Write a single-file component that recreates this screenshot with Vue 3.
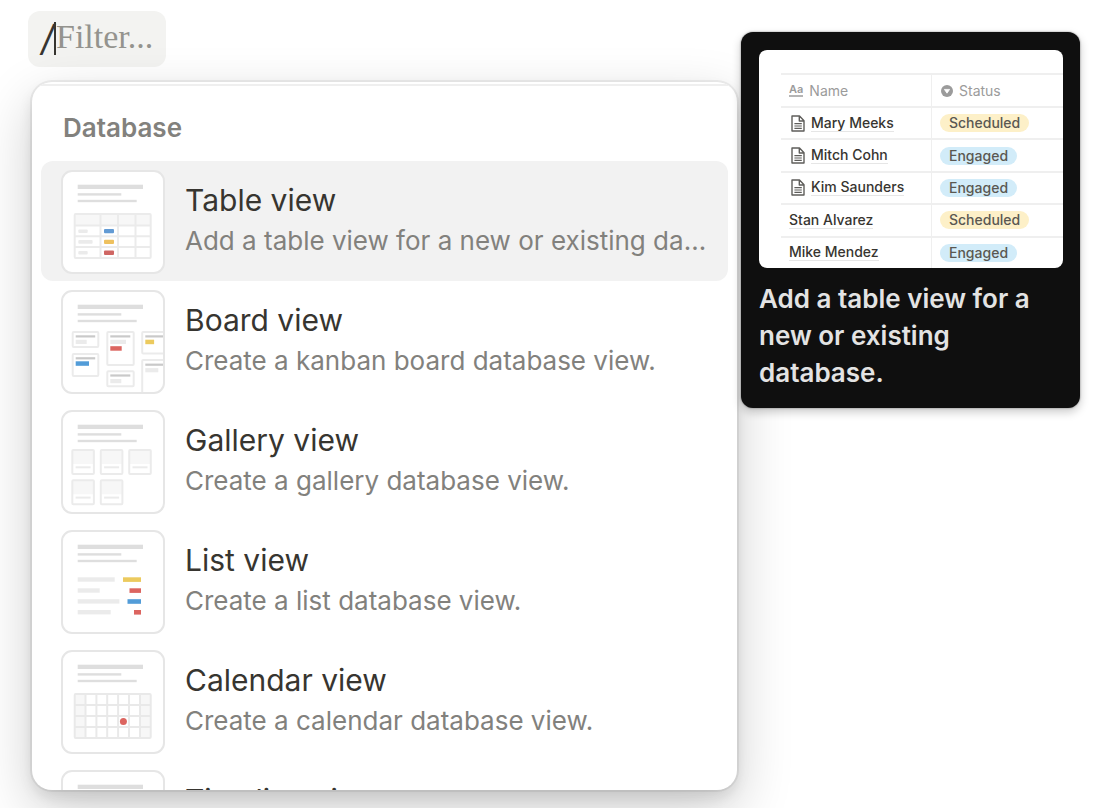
<script setup>
import { ref } from 'vue'

const items = [
  { kind: 'table', title: 'Table view', text: 'Add a table view for a new or existing database.' },
  { kind: 'board', title: 'Board view', text: 'Create a kanban board database view.' },
  { kind: 'gallery', title: 'Gallery view', text: 'Create a gallery database view.' },
  { kind: 'list', title: 'List view', text: 'Create a list database view.' },
  { kind: 'calendar', title: 'Calendar view', text: 'Create a calendar database view.' },
  { kind: 'timeline', title: 'Timeline view', text: '' },
]
const active = ref('table')
const query = ref('')

const people = [
  { name: 'Mary Meeks', status: 'Scheduled', page: true },
  { name: 'Mitch Cohn', status: 'Engaged', page: true },
  { name: 'Kim Saunders', status: 'Engaged', page: true },
  { name: 'Stan Alvarez', status: 'Scheduled', page: false },
  { name: 'Mike Mendez', status: 'Engaged', page: false },
]

const galleryCards = [[11.3, 40], [39.8, 40], [68.2, 40], [11.3, 70.3], [39.8, 70.3]]
const listBars = [
  { y: 47.3, w: 37, tag: 18, color: '#ecca5e' },
  { y: 58.3, w: 22, tag: 11.5, color: '#dc6560' },
  { y: 69.2, w: 41.7, tag: 13.5, color: '#529cd8' },
  { y: 80, w: 33, tag: 7, color: '#dc6560' },
]
</script>

<template>
  <main class="page">
    <section class="left">
      <label class="command">
        <span class="slash">/</span><span class="caret"></span>
        <input v-model="query" class="query" type="text" placeholder="Filter..." aria-label="Filter" />
      </label>

      <div class="menu">
        <h2 class="heading">Database</h2>
        <button
          v-for="item in items"
          :key="item.kind"
          type="button"
          class="item"
          :class="{ active: active === item.kind }"
          @click="active = item.kind"
        >
          <span class="thumb">
            <svg viewBox="2 2 100 100" aria-hidden="true">
              <g fill="#dedede">
                <rect x="16.7" y="14.7" width="65.3" height="4.3" />
                <rect x="16.7" y="23.2" width="43.6" height="2.4" />
                <rect x="16.7" y="29.8" width="59" height="2.4" />
              </g>

              <g v-if="item.kind === 'table'">
                <rect x="13.7" y="44" width="76" height="11.3" fill="#f7f7f7" />
                <g fill="none" stroke="#ebebeb" stroke-width="2">
                  <rect x="13.7" y="44" width="76" height="44" rx="1" />
                  <path d="M39.5 44V88M57 44V88M74.5 44V88M13.7 55.5H89.7M13.7 66.2H89.7M13.7 77H89.7" />
                </g>
                <g fill="#ebebeb">
                  <rect x="17.3" y="59.4" width="9.4" height="3.6" rx="1" />
                  <rect x="17.3" y="70.1" width="14.3" height="3.6" rx="1" />
                  <rect x="17.3" y="81" width="9.4" height="3.6" rx="1" />
                </g>
                <rect x="43" y="59" width="10" height="4.3" rx="1" fill="#639bd4" />
                <rect x="43" y="69.8" width="10" height="4.3" rx="1" fill="#eec15f" />
                <rect x="43" y="80.6" width="10" height="4.3" rx="1" fill="#cf6663" />
              </g>

              <g v-else-if="item.kind === 'board'">
                <g fill="none" stroke="#ebebeb" stroke-width="2">
                  <rect x="11.7" y="42" width="25.6" height="15" rx="1" />
                  <rect x="11.7" y="64" width="25.6" height="22" rx="1" />
                  <rect x="46.3" y="42" width="26.4" height="33" rx="1" />
                  <rect x="46.3" y="81.3" width="26.4" height="15" rx="1" />
                  <rect x="81.2" y="42" width="30" height="21.4" rx="1" />
                  <rect x="81.2" y="70" width="30" height="40" rx="1" />
                </g>
                <g fill="#c9c9c9">
                  <rect x="14.7" y="45.3" width="19.5" height="2.2" />
                  <rect x="14.7" y="67.2" width="19.5" height="2.2" />
                  <rect x="49.3" y="45.3" width="20" height="2.2" />
                  <rect x="49.3" y="84.4" width="20" height="2.2" />
                  <rect x="84.3" y="45.3" width="20" height="2.2" />
                  <rect x="84.3" y="73.6" width="20" height="2.2" />
                </g>
                <g fill="#ebebeb">
                  <rect x="14.7" y="49.8" width="11" height="4.2" />
                  <rect x="49.3" y="49.8" width="15.7" height="4.2" />
                  <rect x="49.3" y="89" width="11" height="4.2" />
                  <rect x="84.3" y="78.1" width="13" height="4.2" />
                </g>
                <rect x="14.7" y="71.3" width="13.3" height="4.5" fill="#529cd8" />
                <rect x="49.3" y="56.2" width="11.4" height="4.5" fill="#dc6560" />
                <rect x="84.3" y="49.7" width="8.8" height="4.5" fill="#ecca5e" />
              </g>

              <g v-else-if="item.kind === 'gallery'">
                <g v-for="[x, y] in galleryCards" :key="`${x}-${y}`">
                  <rect :x="x" :y="y" width="21.6" height="14" fill="#f7f7f7" />
                  <rect :x="x" :y="y" width="21.6" height="24" rx="1" fill="none" stroke="#ebebeb" stroke-width="2" />
                  <rect :x="x + 3.3" :y="y + 16.3" width="15" height="2" fill="#ebebeb" />
                </g>
              </g>

              <g v-else-if="item.kind === 'list'">
                <g v-for="bar in listBars" :key="bar.y">
                  <rect x="16.7" :y="bar.y" :width="bar.w" height="4.4" fill="#ebebeb" />
                  <rect :x="80 - bar.tag" :y="bar.y" :width="bar.tag" height="4.6" :fill="bar.color" />
                </g>
              </g>

              <g v-else-if="item.kind === 'calendar'">
                <path d="M13.7 44H24.3V88H13.7ZM79.2 44H89.7V88H79.2Z" fill="#f7f7f7" />
                <g fill="none" stroke="#e9e9e9" stroke-width="2">
                  <rect x="13.7" y="44" width="76" height="44" rx="1" />
                  <path d="M24.5 44V88M35.4 44V88M46.2 44V88M57.1 44V88M68 44V88M79 44V88M13.7 55H89.7M13.7 66H89.7M13.7 77H89.7" />
                </g>
                <circle cx="62.4" cy="71.4" r="3.5" fill="#dc6560" />
              </g>
            </svg>
          </span>
          <span class="copy">
            <span class="title">{{ item.title }}</span>
            <span class="text">{{ item.text }}</span>
          </span>
        </button>
      </div>
    </section>

    <aside class="tip">
      <div class="preview">
        <table>
          <thead>
            <tr>
              <th scope="col">
                <span class="cell"><span class="aa">Aa</span>Name</span>
              </th>
              <th scope="col">
                <span class="cell">
                  <svg class="select-icon" viewBox="0 0 12 12" aria-hidden="true">
                    <circle cx="6" cy="6" r="6" fill="#9b9b9b" />
                    <path d="M3.4 4.4H8.6L6 8.2Z" fill="#fff" stroke="#fff" stroke-width=".8" stroke-linejoin="round" />
                  </svg>
                  Status
                </span>
              </th>
            </tr>
          </thead>
          <tbody>
            <tr v-for="person in people" :key="person.name">
              <td>
                <span class="cell">
                  <svg v-if="person.page" class="page-icon" viewBox="0 0 14 17" aria-hidden="true">
                    <path d="M1 1H8.5L13 5.8V16H1Z M8.3 1V6H13" fill="none" stroke="#5f5e5b" stroke-width="1.4" stroke-linejoin="round" />
                    <path d="M3.4 8.6H10.8M3.4 11H10.8M3.4 13.4H10.8" stroke="#5f5e5b" stroke-width="1.1" />
                  </svg>
                  <span class="name">{{ person.name }}</span>
                </span>
              </td>
              <td><span class="tag" :class="person.status.toLowerCase()">{{ person.status }}</span></td>
            </tr>
          </tbody>
        </table>
      </div>
      <p class="caption">Add a table view for a new or existing database.</p>
    </aside>
  </main>
</template>

<style>
body {
  margin: 0;
  background: #fff;
}
</style>

<style scoped>
* {
  box-sizing: border-box;
}
.page {
  display: grid;
  grid-template-columns: minmax(0, 1fr) 339px;
  gap: 4px;
  height: 100vh;
  padding: 11px 22px 18px 28px;
  overflow: hidden;
  font-family: Inter, "Liberation Sans", sans-serif;
  color: #373530;
}
.left {
  display: flex;
  flex-direction: column;
  align-items: flex-start;
  gap: 15px;
  min-height: 0;
}
.command {
  display: flex;
  flex: none;
  align-items: center;
  height: 56px;
  width: 138px;
  padding: 0 8px 2px 13px;
  border-radius: 12px;
  background: #f3f3f1;
}
.slash {
  font: italic 400 36px/40px Inter, sans-serif;
}
.caret {
  flex: none;
  width: 2px;
  height: 33px;
  background: #373530;
}
.query {
  flex: 1;
  min-width: 0;
  height: 44px;
  padding: 0 0 2px;
  border: 0;
  outline: 0;
  background: transparent;
  color: #373530;
  font: 34px/40px "Liberation Serif", serif;
}
.query::placeholder {
  color: #94938e;
  opacity: 1;
}
.menu {
  flex: 1;
  align-self: stretch;
  min-height: 0;
  margin-left: 4px;
  padding: 2px 9px 0;
  overflow: hidden;
  border-radius: 20px;
  background: #fff;
  box-shadow: 0 0 0 2px rgba(15, 15, 15, 0.06), 0 7px 14px rgba(15, 15, 15, 0.1),
    0 20px 56px rgba(15, 15, 15, 0.2);
}
.heading {
  margin: 0 -9px;
  padding: 22px 31px 13px;
  border-top: 2px solid #efefef;
  color: #82817d;
  font-size: 26px;
  font-weight: 600;
  line-height: 40px;
}
.item {
  display: flex;
  align-items: center;
  gap: 20px;
  width: 100%;
  height: 120px;
  padding: 2px 18px 0 20px;
  border: 0;
  border-radius: 12px;
  background: transparent;
  color: inherit;
  font-family: inherit;
  text-align: left;
}
.item.active {
  background: #f2f2f2;
}
.thumb {
  flex: none;
  width: 104px;
  height: 104px;
  overflow: hidden;
  border: 2px solid #e6e6e6;
  border-radius: 11px;
  background: #fff;
}
.thumb svg {
  display: block;
  width: 100%;
  height: 100%;
}
.copy {
  display: flex;
  flex: 1;
  flex-direction: column;
  min-width: 0;
  height: 84px;
}
.title {
  font-size: 30px;
  line-height: 40px;
}
.text {
  overflow: hidden;
  color: #82817d;
  font-size: 26px;
  line-height: 42px;
  text-overflow: ellipsis;
  white-space: nowrap;
}
.tip {
  z-index: 1;
  align-self: start;
  margin-top: 21px;
  padding: 18px 17px 17px 18px;
  border-radius: 12px;
  background: #0f0f0f;
  box-shadow: 0 0 2px rgba(15, 15, 15, 0.5), 0 4px 10px rgba(15, 15, 15, 0.22);
}
.preview {
  height: 218px;
  padding: 23px 0 0 22px;
  overflow: hidden;
  border-radius: 8px;
  background: #fff;
}
table {
  width: 100%;
  height: 195px;
  border-spacing: 0;
  table-layout: fixed;
  font-size: 14px;
  line-height: 18px;
}
th,
td {
  padding: 0 0 0 8px;
  border-top: 2px solid #efefef;
  text-align: left;
}
th:first-child,
td:first-child {
  width: 151px;
  border-right: 1px solid #efefef;
}
th {
  height: 33px;
  color: #9b9b9b;
  font-weight: 400;
}
.cell {
  display: flex;
  align-items: center;
  gap: 6px;
}
.aa {
  border-bottom: 2px solid #b5b5b5;
  font-size: 11px;
  font-weight: 600;
  line-height: 11px;
}
.select-icon {
  width: 12px;
  height: 12px;
  margin-left: 1px;
}
.page-icon {
  width: 14px;
  height: 17px;
  margin-left: 2px;
}
.name {
  border-bottom: 1px solid #e6e6e6;
  color: #373530;
  font-weight: 500;
  line-height: 16px;
}
.tag {
  display: inline-block;
  padding: 0 9px;
  border-radius: 9px;
  color: #5a5852;
  font-weight: 500;
}
.scheduled {
  background: #fdf0c8;
}
.engaged {
  background: #d2ecf9;
}
.caption {
  margin: 12px 0 0;
  color: #e3e3e3;
  font-size: 26px;
  font-weight: 600;
  line-height: 37px;
}
</style>
